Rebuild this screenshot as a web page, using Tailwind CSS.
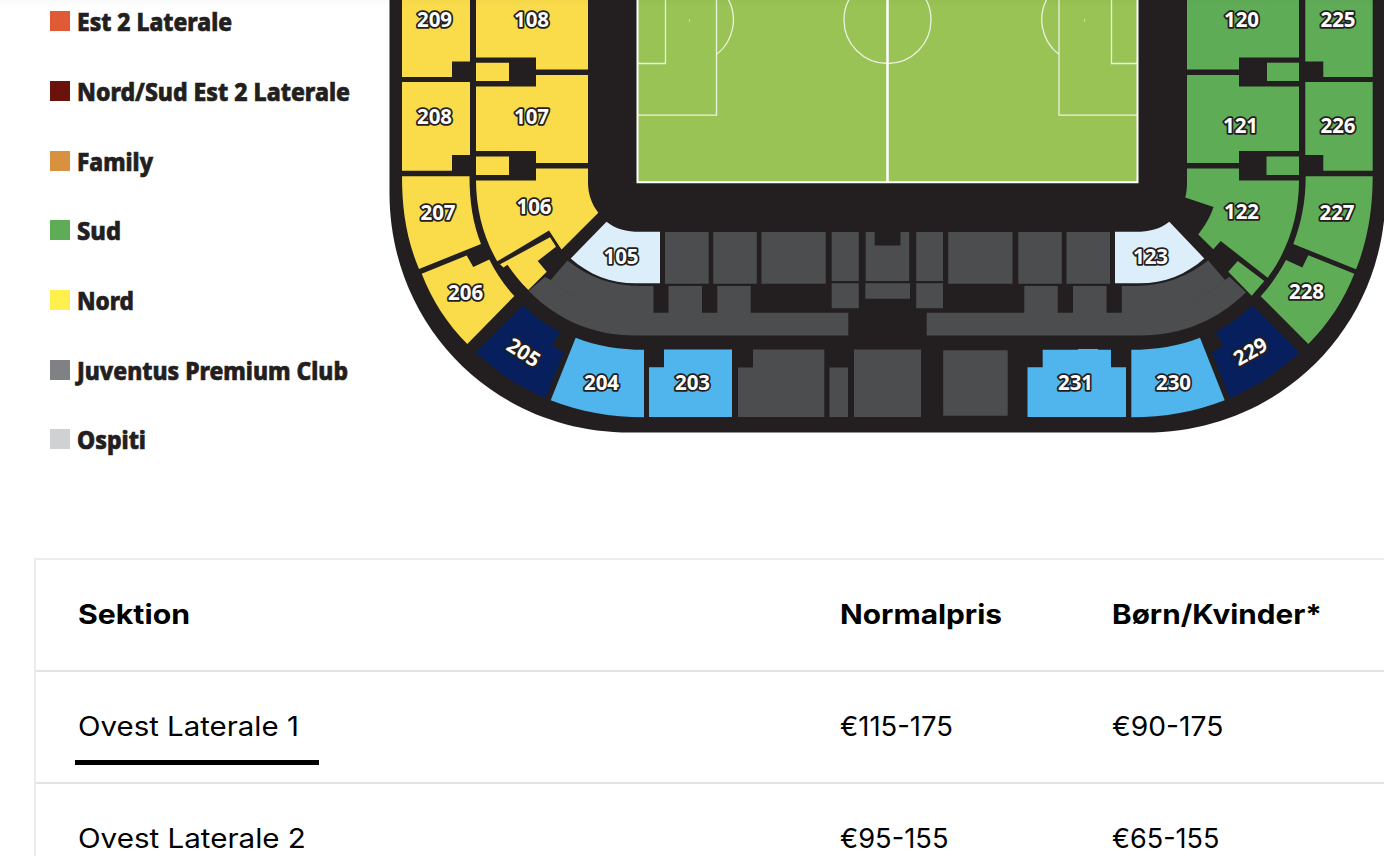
<!DOCTYPE html>
<html lang="da">
<head>
<meta charset="utf-8">
<title>Billetpriser</title>
<script src="https://cdn.jsdelivr.net/npm/@tailwindcss/browser@4"></script>
</head>
<body class="h-[856px] overflow-hidden bg-white text-black">
<main class="relative flex h-[856px] flex-col overflow-hidden">
  <div class="pointer-events-none absolute inset-x-0 top-0 h-2 bg-linear-to-b from-black/2 to-transparent"></div>
  <section class="flex h-[558px] shrink-0">
    <ul class="flex w-[384px] shrink-0 flex-col pl-[50px] font-['Noto_Sans','Open_Sans',sans-serif] text-[25px] font-extrabold leading-[20px] text-[#231f20] [&>li]:flex [&>li]:h-[69.7px] [&>li]:shrink-0 [&>li]:items-start [&>li]:gap-[7px] pt-[11.3px] [&_i]:size-5 [&_i]:shrink-0 [&_svg]:h-[30px] [&_svg]:w-[290px] [&_svg]:overflow-visible [&_svg]:fill-[#231f20] [&_svg]:stroke-[#231f20] [&_svg]:stroke-[0.7px]">
      <li><i class="bg-[#e15a36]"></i><svg><text x="0" y="19.700" textLength="155" lengthAdjust="spacingAndGlyphs">Est 2 Laterale</text></svg></li>
      <li><i class="bg-[#6c120c]"></i><svg><text x="0" y="19.700" textLength="273" lengthAdjust="spacingAndGlyphs">Nord/Sud Est 2 Laterale</text></svg></li>
      <li><i class="bg-[#d8923f]"></i><svg><text x="0" y="19.700" textLength="76" lengthAdjust="spacingAndGlyphs">Family</text></svg></li>
      <li><i class="bg-[#5fac57]"></i><svg><text x="0" y="19.700" textLength="44" lengthAdjust="spacingAndGlyphs">Sud</text></svg></li>
      <li><i class="bg-[#ffef4f]"></i><svg><text x="0" y="19.700" textLength="57" lengthAdjust="spacingAndGlyphs">Nord</text></svg></li>
      <li><i class="bg-[#808184]"></i><svg><text x="0" y="19.700" textLength="271" lengthAdjust="spacingAndGlyphs">Juventus Premium Club</text></svg></li>
      <li><i class="bg-[#d0d1d3]"></i><svg><text x="0" y="19.700" textLength="69" lengthAdjust="spacingAndGlyphs">Ospiti</text></svg></li>
    </ul>
    <svg class="h-[456px] w-[1000px] shrink-0" viewBox="384 0 1000 456">
      <path fill="#231f20" d="M389.5 0V193C389.5 326 494 432.5 630 432.5H1145C1281 432.5 1385.500 326 1385.500 193V0Z"/>
      <!-- pitch -->
      <path fill="#99c355" stroke="#fff" stroke-width="2" d="M637.500-5V182.300H1137.500V-5Z"/>
      <g fill="none" stroke="#fff" stroke-opacity=".8" stroke-width="1.300">
        <path stroke-opacity="1" stroke-width="2.500" d="M887.500 0V182"/>
        <circle cx="887.500" cy="20" r="43.500"/>
        <path d="M638 63.500H665.500V0M638 115.200H716.500V0M716.500 54.500A44 44 0 0 0 727 -3M1137 63.500H1111.500V0M1137 115.200H1059V0M1059 54.500A44 44 0 0 1 1048 -3"/>
        <path stroke-width="1" stroke-opacity=".45" d="M689.500 19v3M1084.500 19v3"/>
      </g>
      <!-- Nord -->
      <g fill="#fadc4b">
        <path d="M402 0H470V61.500H452V77H402Z"/>
        <path d="M402 82H470V155H452V170.700H402Z"/>
        <path d="M402 176.300H469.500C469.500 202 473 224 481 244L419 269C406 238 402 208 402 176.300Z"/>
        <path d="M421.700 273.800L466.700 255.500 473.300 267 489.300 259.500C496 273 504 285 514.300 296L467.300 344C447 324 432 300 421.700 273.800Z"/>
        <path d="M476 0H588V69.500H536V57.500H476Z"/>
        <path d="M476 62.700H509V81H476Z"/>
        <path d="M476 86.500H536V75H588V163H536V151H476Z"/>
        <path d="M476 156.500H509V175H476Z"/>
        <path d="M476 180.500H536V168.500H588V182C588 194 591.500 204 598.300 212.700L561.500 249.500 549 230.500 497.300 261.300C483 237 476 208 476 180.500Z"/>
        <path d="M500 264.300L550 237.300 556 246.700 537.700 261 546.700 271.700 528.300 290C520 282 513 273 507.500 264.800L503.500 267.500Z"/>
      </g>
      <!-- Sud -->
      <g fill="#5fac57">
        <path d="M1187 0H1299V57.500H1239V69.500H1187Z"/>
        <path d="M1267 62.700H1299V81H1267Z"/>
        <path d="M1187 75H1239V86.500H1299V151H1239V163H1187Z"/>
        <path d="M1266.500 156.500H1299V175H1266.500Z"/>
        <path d="M1187 168.500H1239V180.500H1299C1299 215 1289 249 1267.700 277.700L1220.700 241 1213.300 249.300 1198.300 234.500C1204 227 1210 218 1213.500 207L1185.300 197.500C1186.500 193 1187 188 1187 182Z"/>
        <path d="M1237.700 261L1264.300 281 1251.700 295.700 1228.300 271.700Z"/>
        <path d="M1305.300 0H1372.700V77H1323.300V61.500H1305.300Z"/>
        <path d="M1305.300 82H1372.700V170.700H1323.300V155H1305.300Z"/>
        <path d="M1305.700 176.300H1372.700C1372.700 208 1368 240 1356 269.300L1293.300 244C1301 224 1305.700 202 1305.700 176.300Z"/>
        <path d="M1308.300 255.300L1354.300 273.800C1344 300 1328.500 324 1308.300 344L1260.700 296.300C1271 285 1279 273 1286 260L1302.300 267.500Z"/>
      </g>
      <!-- premium club -->
      <g fill="#4c4d4f">
        <path d="M567.500 260.500C588 277 612 286 640 286H653.500V312.700H668.500V286H702V312.700H717.300V286H750.700V312.700H848.300V335.500H635C594 335.500 557 320 528.500 290.700L545 277 550.700 280Z"/>
        <path d="M1208.300 260.500C1187 277 1163 286 1135 286H1121.800V312.700H1106.500V286H1073V312.700H1057.700V286H1024.300V312.700H926.700V335.500H1140C1181 335.500 1217 321 1246 292.300L1229.300 276.700 1225 280Z"/>
        <path d="M665 232H708.700V283.700H665ZM713.200 232H756.800V283.700H713.200ZM761.500 232H825.700V283.700H761.500ZM831.700 232H858.800V281H831.700ZM831.700 283.300H858.800V308.300H831.700ZM865.700 232H874.700V245.500H900.500V232H909.200V281H865.700ZM865.300 283.300H910V298.700H865.300ZM916.200 232H943V281H916.200ZM916.200 283.300H943V308.300H916.200ZM948.200 232H1012.500V283.700H948.200ZM1018.300 232H1061.800V283.700H1018.300ZM1066.500 232H1110V283.700H1066.500Z"/>
        <path d="M753 349.500H824.300V417H738V367.500H753ZM829.500 367.500H848V417H829.500ZM854 349.500H921V417H854ZM943.200 350.300H1007.700V415.800H943.200Z"/>
      </g>
      <g fill="none" stroke="#464749" stroke-width=".5"><path d="M550 280Q562 292 578 298M1225 280Q1210 293 1191 303"/></g>
      <!-- Ovest -->
      <g fill="#dbeef9">
        <path d="M606.500 221.700C616 229 626 231.800 640 231.800H660V283.300H636C610 283.300 589 274.500 570.700 258.500Z"/>
        <path d="M1169.300 221.700C1160 229 1149 231.800 1136 231.800H1115V283.300H1139C1165 283.300 1186 274.500 1204.300 258.500Z"/>
      </g>
      <g fill="#50b5ed">
        <path d="M575.700 337.700C597 346 620 349.800 644 349.800V417.200C611 417.200 580 412 550.700 400.300Z"/>
        <path d="M664 349.500H732V417H649V367.300H664Z"/>
        <path d="M1042.700 349.700H1078V349H1098V349.700H1111V367.300H1126V417H1027.500V367.300H1042.700Z"/>
        <path d="M1200 337.700C1178 346 1156 349.800 1131.300 349.800V417.200C1165 417.200 1195 412 1224.700 400.300Z"/>
      </g>
      <g fill="#071f5c">
        <path d="M523.300 305.300C534 316 546 325 560 331.700L552.300 346 564 352.300 545.700 398C519 387 496 372 476 352.300Z"/>
        <path d="M1252 305.300C1241 316 1229 325 1215.700 331.700L1223.300 346 1211.700 352.300 1229.500 398C1256 387 1279 372 1299.500 352.300Z"/>
      </g>
      <g class="font-['Noto_Sans','Open_Sans',sans-serif] text-[20.5px] font-bold" transform="translate(0 -.3)" text-anchor="middle" fill="#fff" stroke="#231f20" stroke-width="3.600" stroke-linejoin="round" paint-order="stroke">
        <text x="434.500" y="27">209</text><text x="434.500" y="124.500">208</text><text x="438" y="220.500">207</text><text x="465.700" y="300.500">206</text>
        <text x="531.500" y="27">108</text><text x="531.500" y="124.500">107</text><text x="534" y="214.500">106</text><text x="621" y="264">105</text>
        <text x="601.500" y="390">204</text><text x="692.500" y="390">203</text><text x="1075.500" y="390">231</text><text x="1173.500" y="390">230</text>
        <text x="1150.500" y="264">123</text><text x="1241.500" y="27">120</text><text x="1240.500" y="133">121</text><text x="1241.500" y="219.500">122</text>
        <text x="1338" y="27">225</text><text x="1338" y="133">226</text><text x="1337" y="220.500">227</text><text x="1306.500" y="299.500">228</text>
        <text transform="translate(523.500 353) rotate(33)" y="7">205</text><text transform="translate(1250.500 352) rotate(-30)" y="7">229</text>
      </g>
    </svg>
  </section>
  <section class="ml-[34px] w-[1400px] shrink-0 border-2 border-[#ececec] font-['Inter',sans-serif] text-[27px] [&>div]:grid [&>div]:h-[112px] [&>div]:grid-cols-[762px_272px_1fr] [&>div]:items-center [&>div]:border-b-2 [&>div]:border-[#e2e2e2] [&>div]:pl-[42px] [&_span]:origin-left [&_span]:justify-self-start [&_span]:whitespace-nowrap">
    <div class="font-bold"><span class="scale-x-[1.12]">Sektion</span><span class="scale-x-[1.105]">Normalpris</span><span class="scale-x-[1.1]">Børn/Kvinder*</span></div>
    <div><p class="relative"><span class="inline-block scale-x-[1.09]">Ovest Laterale 1</span><b class="absolute top-[53px] -left-[3px] h-[5px] w-[244px] bg-black"></b></p><span class="scale-x-[1.015]">€115-175</span><span class="scale-x-[1.045]">€90-175</span></div>
    <div><span class="scale-x-[1.095]">Ovest Laterale 2</span><span class="scale-x-[1.01]">€95-155</span><span>€65-155</span></div>
  </section>
</main>
</body>
</html>
